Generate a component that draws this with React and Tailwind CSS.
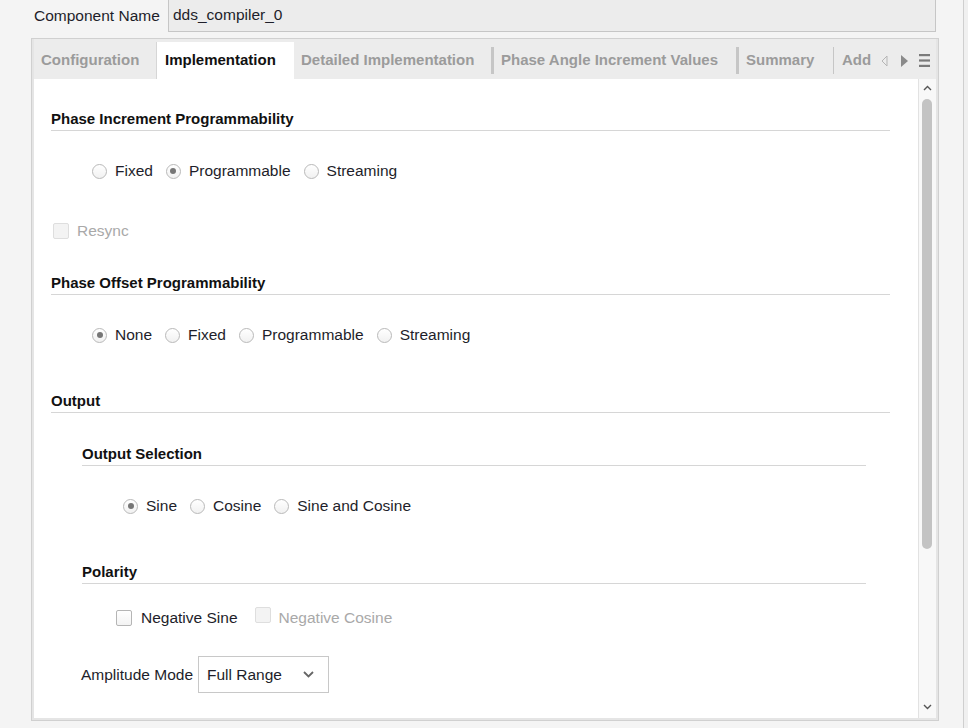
import React from "react";

const FONT = { fontFamily: '"Liberation Sans", Arial, sans-serif' };

function Radio({ checked }) {
  return (
    <span className="relative inline-flex h-[15px] w-[15px] shrink-0 items-center justify-center rounded-full border border-[#b9b9b9] bg-gradient-to-b from-white to-[#f1f1f1]">
      {checked && <span className="h-[6px] w-[6px] rounded-full bg-[#767676]" />}
    </span>
  );
}

function RadioRow({ options, selected }) {
  return (
    <div className="flex h-[20px] items-center gap-[13px] pl-[41px]">
      {options.map((opt) => (
        <div key={opt} className="flex items-center gap-[8px]">
          <Radio checked={opt === selected} />
          <span className="text-[15.5px] leading-[20px] text-[#1e1e2a]">{opt}</span>
        </div>
      ))}
    </div>
  );
}

function Checkbox({ disabled }) {
  return (
    <span
      className={
        disabled
          ? "inline-block h-[16px] w-[16px] shrink-0 rounded-[2px] border border-[#dedede] bg-[#f3f3f3]"
          : "inline-block h-[16px] w-[16px] shrink-0 rounded-[2px] border border-[#b5b5b5] bg-gradient-to-b from-white to-[#f3f3f3]"
      }
    />
  );
}

function Heading({ children, className = "" }) {
  return (
    <div className={"border-b border-[#d6d6d6] pb-[2px] " + className}>
      <div className="text-[15px] font-bold leading-[18px] text-[#111]">{children}</div>
    </div>
  );
}

const tabs = [
  { label: "Configuration", w: "w-[122px]" },
  { label: "Implementation", w: "w-[138px]", active: true },
  { label: "Detailed Implementation", w: "w-[197px]" },
  { label: "Phase Angle Increment Values", w: "w-[242px]", sep: "thick" },
  { label: "Summary", w: "w-[94px]", sep: "thick" },
];

export default function App() {
  return (
    <div className="flex h-[728px] w-[968px] overflow-hidden bg-[#f4f4f4] text-[#1e1e2a]" style={FONT}>
      <div className="flex w-[963px] flex-col">
        {/* component name */}
        <div className="flex h-[32px] items-center">
          <span className="ml-[34px] w-[134px] text-[15.5px]">Component Name</span>
          <div className="-mt-[2px] flex h-[33px] w-[768px] items-center border border-[#c6c6c6] bg-[#ececec] pl-[4px] text-[15.5px]">
            dds_compiler_0
          </div>
        </div>

        {/* tabbed panel */}
        <div className="ml-[31px] mt-[6px] flex h-[683px] w-[908px] flex-col border border-[#d0d0d0] bg-[#e5e5e5] px-[2px] pb-[2px]">
          <div className="flex h-[40px] items-end bg-[#ececec]">
            {tabs.map((t) => (
              <div key={t.label} className="flex h-[37px] items-stretch">
                {t.sep === "thick" && <div className="my-[5px] w-[3px] bg-[#c6c6c6]" />}
                <div
                  className={
                    t.active
                      ? t.w + " flex items-center border-l border-[#d6d6d6] bg-white pl-[8px] text-[15px] font-bold text-[#111]"
                      : t.w + " flex items-center pl-[7px] text-[15px] font-bold text-[#9b9b9b]"
                  }
                >
                  {t.label}
                </div>
              </div>
            ))}
            <div className="flex h-[37px] items-center">
              <div className="my-[5px] h-[27px] w-[1px] bg-[#c6c6c6]" />
              <span className="ml-[8px] text-[15px] font-bold text-[#9b9b9b]">Add</span>
              <svg className="ml-[10px]" width="7" height="12" viewBox="0 0 7 12">
                <path d="M6 1 L1 6 L6 11 Z" fill="none" stroke="#b5b5b5" strokeWidth="1" />
              </svg>
              <svg className="ml-[13px]" width="7" height="12" viewBox="0 0 7 12">
                <path d="M0 0 L7 6 L0 12 Z" fill="#8a8a8a" />
              </svg>
              <svg className="ml-[11px]" width="11" height="13" viewBox="0 0 11 13">
                <rect x="0" y="0" width="11" height="2.2" fill="#7a7a7a" />
                <rect x="0" y="5.4" width="11" height="2.2" fill="#7a7a7a" />
                <rect x="0" y="10.8" width="11" height="2.2" fill="#7a7a7a" />
              </svg>
            </div>
          </div>

          <div className="flex flex-1">
            {/* content */}
            <div className="w-[884px] bg-white pl-[17px] pr-[28px] pt-[31px]">
              <Heading>Phase Increment Programmability</Heading>
              <div className="mt-[30px]">
                <RadioRow options={["Fixed", "Programmable", "Streaming"]} selected="Programmable" />
              </div>
              <div className="mt-[40px] flex h-[20px] items-center gap-[8px] pl-[2px]">
                <Checkbox disabled />
                <span className="text-[15.5px] text-[#a9a9a9]">Resync</span>
              </div>
              <Heading className="mt-[33px]">Phase Offset Programmability</Heading>
              <div className="mt-[30px]">
                <RadioRow options={["None", "Fixed", "Programmable", "Streaming"]} selected="None" />
              </div>
              <Heading className="mt-[47px]">Output</Heading>
              <div className="pl-[31px] pr-[24px]">
                <Heading className="mt-[32px]">Output Selection</Heading>
                <div className="mt-[30px]">
                  <RadioRow options={["Sine", "Cosine", "Sine and Cosine"]} selected="Sine" />
                </div>
                <Heading className="mt-[47px]">Polarity</Heading>
                <div className="mt-[24px] flex h-[20px] items-center pl-[34px]">
                  <Checkbox />
                  <span className="ml-[9px] text-[15.5px]">Negative Sine</span>
                  <span className="ml-[17px]">
                    <Checkbox disabled />
                  </span>
                  <span className="ml-[8px] text-[15.5px] text-[#a9a9a9]">Negative Cosine</span>
                </div>
              </div>
              <div className="mt-[28px] flex items-center pl-[30px]">
                <span className="text-[15.5px]">Amplitude Mode</span>
                <div className="ml-[5px] flex h-[37px] w-[131px] items-center border border-[#c8c8c8] bg-white pl-[8px] text-[15.5px]">
                  <span>Full Range</span>
                  <svg className="ml-auto mr-[14px]" width="11" height="7" viewBox="0 0 11 7">
                    <path d="M1 1 L5.5 5.5 L10 1" fill="none" stroke="#666" strokeWidth="1.8" />
                  </svg>
                </div>
              </div>
            </div>

            {/* scrollbar */}
            <div className="flex w-[18px] flex-col items-center border-l border-[#e2e2e2] bg-[#f8f8f8]">
              <svg className="mt-[6px]" width="9" height="6" viewBox="0 0 9 6">
                <path d="M1 5 L4.5 1.5 L8 5" fill="none" stroke="#555" strokeWidth="1.4" />
              </svg>
              <div className="ml-[-2px] mt-[8px] h-[450px] w-[10px] rounded-full bg-[#c3c3c3]" />
              <div className="flex-1" />
              <svg className="mb-[8px]" width="9" height="6" viewBox="0 0 9 6">
                <path d="M1 1 L4.5 4.5 L8 1" fill="none" stroke="#555" strokeWidth="1.4" />
              </svg>
            </div>
          </div>
        </div>
      </div>
      <div className="w-[1px] bg-[#cfcfcf]" />
      <div className="flex-1 bg-[#f0f0f0]" />
    </div>
  );
}
